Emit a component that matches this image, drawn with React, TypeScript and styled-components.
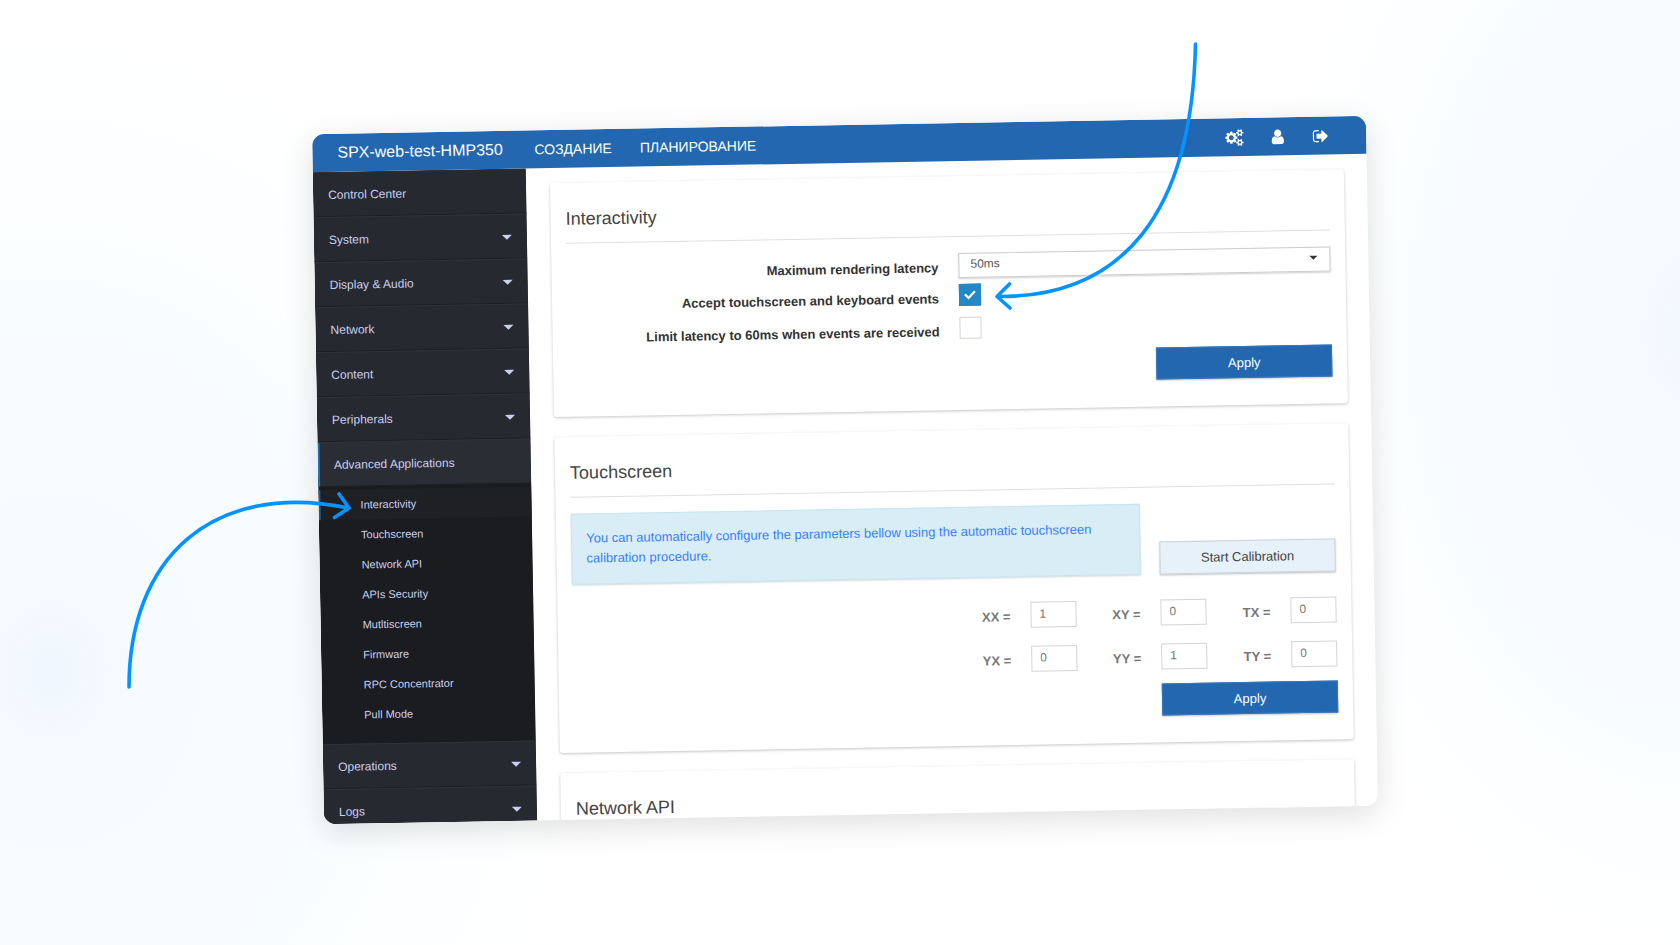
import React from "react";
import styled, { createGlobalStyle } from "styled-components";

const GlobalStyle = createGlobalStyle`
  *, *::before, *::after { box-sizing: border-box; }
  body {
    margin: 0;
    font-family: "Liberation Sans", Arial, sans-serif;
    font-size: 13px;
    color: #444;
  }
  button, input, select { font-family: inherit; }
`;

const Stage = styled.main`
  position: relative;
  display: flex;
  justify-content: center;
  min-height: 100vh;
  padding: 125px 308px 130px 318px;
  overflow: hidden;
  background:
    radial-gradient(ellipse 560px 660px at 3% 71%, #eff7ff, #f4fafe 12%, #f8fcff 40%, rgba(251, 254, 255, 0.7) 70%, rgba(255, 255, 255, 0)),
    radial-gradient(ellipse 440px 640px at 101% 35%, #eff7ff, #f4fafe 14%, #f8fcff 50%, rgba(251, 254, 255, 0.7) 75%, rgba(255, 255, 255, 0)),
    #fff;
`;

const Window = styled.div`
  display: grid;
  grid-template-rows: 38px 652px;
  flex: 1;
  min-width: 0;
  border-radius: 12px;
  overflow: hidden;
  background: #fff;
  box-shadow: 0 8px 32px rgba(0, 0, 0, 0.13);
  transform: rotate(-1deg);
`;

const TopBar = styled.header`
  display: flex;
  align-items: center;
  padding: 0 36px 0 25px;
  background: #2367b0;
  color: #fff;
`;

const Brand = styled.a`
  width: 197px;
  font-size: 16px;
  line-height: 20px;
  color: inherit;
  text-decoration: none;
`;

const TopLinks = styled.nav`
  display: flex;
  flex: 1;
  gap: 28px;
`;

const TopLink = styled.a`
  font-size: 14px;
  line-height: 20px;
  color: inherit;
  text-decoration: none;
`;

const TopActions = styled.div`
  display: flex;
  gap: 24px;
`;

const IconButton = styled.button`
  display: flex;
  justify-content: center;
  width: 19px;
  padding: 0;
  border: 0;
  background: none;
  color: inherit;
  svg { display: block; height: 17px; fill: currentColor; }
`;

const Body = styled.div`
  display: grid;
  grid-template-columns: 213px minmax(0, 1fr);
  min-height: 0;
  overflow: hidden;
`;

const Sidebar = styled.nav`
  overflow: hidden;
  background: #272930;
`;

const MenuItem = styled.a<{ $active?: boolean }>`
  display: flex;
  align-items: center;
  justify-content: space-between;
  height: 45px;
  padding: 1px 15px 0 ${(p) => (p.$active ? 14 : 15)}px;
  border-left: ${(p) => (p.$active ? "2px solid #2375b8" : "0")};
  border-top: 1px solid #30323a;
  border-bottom: 1px solid #1d1f24;
  background: ${(p) => (p.$active ? "#2b2d35" : "#272930")};
  color: #c8cff0;
  font-size: 12px;
  line-height: 17px;
  text-decoration: none;
`;

const Caret = styled.span<{ $dark?: boolean }>`
  width: 0;
  height: 0;
  border-left: ${(p) => (p.$dark ? 4 : 5)}px solid transparent;
  border-right: ${(p) => (p.$dark ? 4 : 5)}px solid transparent;
  border-top: ${(p) => (p.$dark ? "4px solid #333" : "5px solid #c8cff0")};
`;

const SubMenu = styled.div`
  padding: 3px 0 14px;
  background: #1b1c1f;
`;

const SubItem = styled.a<{ $active?: boolean }>`
  display: block;
  height: 30px;
  padding: 0 0 0 ${(p) => (p.$active ? 40 : 42)}px;
  border-left: ${(p) => (p.$active ? "2px solid #1c5f99" : "0")};
  background: ${(p) => (p.$active ? "#1f2024" : "none")};
  color: #c8cff0;
  font-size: 11px;
  line-height: 30px;
  text-decoration: none;
`;

const Content = styled.div`
  display: flex;
  flex-direction: column;
  gap: 20px;
  padding: 15px 23px 0 24px;
  overflow: hidden;
`;

const Card = styled.section`
  flex: none;
  padding: 25px 15px 27px;
  border-radius: 3px;
  box-shadow: 0 1px 3px rgba(0, 0, 0, 0.24);
`;

const CardTitle = styled.h2`
  height: 36px;
  margin: 0 0 16px;
  border-bottom: 1px solid #dfdfdf;
  font-size: 18px;
  font-weight: 400;
  line-height: 22px;
  color: #444;
`;

const FormRow = styled.div<{ $h: number }>`
  display: grid;
  grid-template-columns: 372px minmax(0, 1fr);
  column-gap: 20px;
  height: ${(p) => p.$h}px;
`;

const FieldLabel = styled.label`
  padding-top: 7px;
  font-weight: 700;
  line-height: 16px;
  text-align: right;
  color: #333;
`;

const SelectWrap = styled.div`
  position: relative;
  height: 25px;
  ${Caret} {
    position: absolute;
    right: 13px;
    top: 9px;
    pointer-events: none;
  }
`;

const Select = styled.select`
  display: block;
  width: 100%;
  height: 25px;
  padding: 0 11px 4px;
  appearance: none;
  border: 1px solid #ccc;
  border-radius: 0;
  background: #fff;
  box-shadow: 0 1px 2px rgba(0, 0, 0, 0.2);
  color: #555;
  font-size: 12px;
`;

const CheckWrap = styled.div`
  display: grid;
  width: 22px;
  height: 22px;
  > * { grid-area: 1 / 1; }
  svg { z-index: 1; pointer-events: none; }
`;

const CheckBox = styled.input`
  width: 22px;
  height: 22px;
  margin: 0;
  appearance: none;
  border: 1px solid #d6d4ce;
  background: #fff;
  &:checked { border-color: #2288c8; background: #2288c8; }
`;

const Actions = styled.div`
  display: flex;
  justify-content: flex-end;
  padding-top: 13px;
`;

const Button = styled.button<{ $soft?: boolean }>`
  width: 176px;
  height: ${(p) => (p.$soft ? 33 : 32)}px;
  padding: 0;
  border: 1px solid ${(p) => (p.$soft ? "#ccd3da" : "#3a78b8")};
  background: ${(p) => (p.$soft ? "#e7f1fa" : "#2367b0")};
  box-shadow: 0 1px 2px rgba(0, 0, 0, 0.25);
  color: ${(p) => (p.$soft ? "#444" : "#fff")};
  font-size: 13px;
`;

const CalibrationRow = styled.div`
  display: flex;
  align-items: flex-end;
  gap: 19px;
`;

const Notice = styled.p`
  flex: 1;
  margin: 0;
  padding: 14px 14px 15px;
  border: 1px solid #c6e7f1;
  background: #d9edf7;
  box-shadow: 0 1px 2px rgba(0, 0, 0, 0.15);
  color: #3a80ff;
  font-size: 13px;
  line-height: 20px;
`;

const Matrix = styled.div`
  display: grid;
  grid-template-columns: repeat(3, 46px);
  justify-content: end;
  gap: 18px 84px;
  padding: 25px 0 1px;
`;

const Cell = styled.div`
  display: flex;
  justify-content: flex-end;
  gap: 20px;
`;

const CellLabel = styled.label`
  flex: none;
  padding-top: 7px;
  font-weight: 700;
  line-height: 16px;
  color: #777;
`;

const CellInput = styled.input`
  flex: none;
  width: 46px;
  height: 26px;
  padding: 0 8px 3px;
  border: 1px solid #d4d4d4;
  background: #fff;
  color: #777;
  font-size: 12px;
`;

const Arrows = styled.svg`
  position: absolute;
  top: 0;
  left: 50%;
  width: 1680px;
  height: 945px;
  margin-left: -840px;
  pointer-events: none;
  fill: none;
  stroke: #0594ff;
  stroke-width: 3.6;
  stroke-linecap: round;
  stroke-linejoin: round;
`;

const SMALL_GEAR =
  "v140q0 16-149 31-12 27-30 52 51 113 51 138 0 4-4 7-122 71-124 71-8 0-46-47t-52-68q-20 2-30 2t-30-2q-14 21-52 68t-46 47q-2 0-124-71-4-3-4-7 0-25 51-138-18-25-30-52-149-15-149-31v-140q0-16 149-31 13-29 30-52-51-113-51-138 0-4 4-7 4-2 35-20t59-34 30-16q8 0 46 46.5t52 67.5q20-2 30-2t30 2q51-71 92-112l6-2q4 0 124 70 4 3 4 7 0 25-51 138 17 23 30 52 149 15 149 31z";

const GearsIcon = () => (
  <svg viewBox="0 0 1920 1792" aria-hidden="true">
    <path
      d={
        "M896 896q0-106-75-181t-181-75-181 75-75 181 75 181 181 75 181-75 75-181zm768 512q0-52-38-90t-90-38-90 38-38 90q0 53 37.5 90.5t90.5 37.5 90.5-37.5 37.5-90.5zm0-1024q0-52-38-90t-90-38-90 38-38 90q0 53 37.5 90.5t90.5 37.5 90.5-37.5 37.5-90.5zm-384 421v185q0 10-7 19.5t-16 10.5l-155 24q-11 35-32 76 34 48 90 115 7 11 7 20 0 12-7 19-23 30-82.5 89.5t-78.5 59.5q-11 0-21-7l-115-90q-37 19-77 31-11 108-23 155-7 24-30 24h-186q-11 0-20-7.5t-10-17.5l-23-153q-34-10-75-31l-118 89q-7 7-20 7-11 0-21-8-144-133-144-160 0-9 7-19 10-14 41-53t47-61q-23-44-35-82l-152-24q-10-1-17-9.5t-7-19.5v-185q0-10 7-19.5t16-10.5l155-24q11-35 32-76-34-48-90-115-7-11-7-20 0-12 7-20 22-30 82-89t79-59q11 0 21 7l115 90q34-18 77-32 11-108 23-154 7-24 30-24h186q11 0 20 7.5t10 17.5l23 153q34 10 75 31l118-89q8-7 20-7 11 0 21 8 144 133 144 160 0 8-7 19-12 16-42 54t-45 60q23 48 34 82l152 23q10 2 17 10.5t7 19.5zm640 533" +
        SMALL_GEAR +
        "m0-1024" +
        SMALL_GEAR
      }
    />
  </svg>
);

const UserIcon = () => (
  <svg viewBox="0 0 1792 1792" aria-hidden="true">
    <path d="M1536 1399q0 109-62.5 187t-150.5 78h-854q-88 0-150.5-78t-62.5-187q0-85 8.5-160.5t31.5-152 58.5-131 94-89 134.5-34.5q131 128 313 128t313-128q76 0 134.5 34.5t94 89 58.5 131 31.5 152 8.5 160.5zm-256-887q0 159-112.5 271.5t-271.5 112.5-271.5-112.5-112.5-271.5 112.5-271.5 271.5-112.5 271.5 112.5 112.5 271.5z" />
  </svg>
);

const SignOutIcon = () => (
  <svg viewBox="0 0 1792 1792" aria-hidden="true">
    <path d="M704 1440q0 4 1 20t.5 26.5-3 23.5-10 19.5-20.5 6.5h-320q-119 0-203.5-84.5t-84.5-203.5v-704q0-119 84.5-203.5t203.5-84.5h320q13 0 22.5 9.5t9.5 22.5q0 4 1 20t.5 26.5-3 23.5-10 19.5-20.5 6.5h-320q-66 0-113 47t-47 113v704q0 66 47 113t113 47h312l11.5 1 11.5 3 8 5.5 7 9 2 13.5zm928-544q0 26-19 45l-544 544q-19 19-45 19t-45-19-19-45v-288h-448q-26 0-45-19t-19-45v-384q0-26 19-45t45-19h448v-288q0-26 19-45t45-19 45 19l544 544q19 19 19 45z" />
  </svg>
);

const MENU_TOP = ["System", "Display & Audio", "Network", "Content", "Peripherals"];
const MENU_BOTTOM = ["Operations", "Logs"];
const SUB_ITEMS = [
  "Interactivity",
  "Touchscreen",
  "Network API",
  "APIs Security",
  "Mutltiscreen",
  "Firmware",
  "RPC Concentrator",
  "Pull Mode",
];
const MATRIX = [
  ["XX", "1"],
  ["XY", "0"],
  ["TX", "0"],
  ["YX", "0"],
  ["YY", "1"],
  ["TY", "0"],
];

const ExpandableItem = ({ label }: { label: string }) => (
  <MenuItem href="#">
    {label}
    <Caret />
  </MenuItem>
);

export default function App() {
  return (
    <>
      <GlobalStyle />
      <Stage>
        <Window>
          <TopBar>
            <Brand href="#">SPX-web-test-HMP350</Brand>
            <TopLinks>
              <TopLink href="#">СОЗДАНИЕ</TopLink>
              <TopLink href="#">ПЛАНИРОВАНИЕ</TopLink>
            </TopLinks>
            <TopActions>
              <IconButton aria-label="Settings"><GearsIcon /></IconButton>
              <IconButton aria-label="Account"><UserIcon /></IconButton>
              <IconButton aria-label="Sign out"><SignOutIcon /></IconButton>
            </TopActions>
          </TopBar>
          <Body>
            <Sidebar>
              <MenuItem href="#">Control Center</MenuItem>
              {MENU_TOP.map((label) => (
                <ExpandableItem key={label} label={label} />
              ))}
              <MenuItem href="#" $active>Advanced Applications</MenuItem>
              <SubMenu>
                {SUB_ITEMS.map((label, i) => (
                  <SubItem key={label} href="#" $active={i === 0}>{label}</SubItem>
                ))}
              </SubMenu>
              {MENU_BOTTOM.map((label) => (
                <ExpandableItem key={label} label={label} />
              ))}
            </Sidebar>
            <Content>
              <Card>
                <CardTitle>Interactivity</CardTitle>
                <FormRow $h={31}>
                  <FieldLabel htmlFor="latency">Maximum rendering latency</FieldLabel>
                  <SelectWrap>
                    <Select id="latency" defaultValue="50ms">
                      <option>50ms</option>
                    </Select>
                    <Caret $dark />
                  </SelectWrap>
                </FormRow>
                <FormRow $h={33}>
                  <FieldLabel htmlFor="accept">Accept touchscreen and keyboard events</FieldLabel>
                  <CheckWrap>
                    <CheckBox id="accept" type="checkbox" defaultChecked />
                    <svg width="22" height="22" viewBox="0 0 22 22" fill="none" stroke="#fff" strokeWidth="2.2" aria-hidden="true">
                      <path d="M6 10.500l3.600 3.600L16 7.500" />
                    </svg>
                  </CheckWrap>
                </FormRow>
                <FormRow $h={21}>
                  <FieldLabel htmlFor="limit">Limit latency to 60ms when events are received</FieldLabel>
                  <CheckWrap>
                    <CheckBox id="limit" type="checkbox" />
                  </CheckWrap>
                </FormRow>
                <Actions>
                  <Button>Apply</Button>
                </Actions>
              </Card>
              <Card>
                <CardTitle>Touchscreen</CardTitle>
                <CalibrationRow>
                  <Notice>
                    You can automatically configure the parameters bellow using the automatic touchscreen calibration procedure.
                  </Notice>
                  <Button $soft>Start Calibration</Button>
                </CalibrationRow>
                <Matrix>
                  {MATRIX.map(([name, value]) => (
                    <Cell key={name}>
                      <CellLabel htmlFor={name}>{name} =</CellLabel>
                      <CellInput id={name} defaultValue={value} />
                    </Cell>
                  ))}
                </Matrix>
                <Actions>
                  <Button>Apply</Button>
                </Actions>
              </Card>
              <Card>
                <CardTitle>Network API</CardTitle>
              </Card>
            </Content>
          </Body>
        </Window>
        <Arrows viewBox="0 0 1680 945" aria-hidden="true">
          <path d="M129 687C129 560 210 480 349 508M339 494L349 508L334.500 517.500" />
          <path d="M1195.500 44C1192 214 1122 298 997 296.500M1009.500 284L997 296.500L1010 308" />
        </Arrows>
      </Stage>
    </>
  );
}
